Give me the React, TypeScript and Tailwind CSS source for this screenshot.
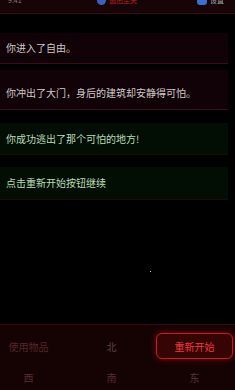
import React from 'react';

const LOG = [
  { text: '你进入了自由。', tone: 'red', box: 'h-[31px]', pad: 'pt-0' },
  { text: '你冲出了大门，身后的建筑却安静得可怕。', tone: 'red', box: 'h-[40px]', pad: 'pt-[6px]' },
  { text: '你成功逃出了那个可怕的地方!', tone: 'green', box: 'h-[32px]', pad: 'pt-0' },
  { text: '点击重新开始按钮继续', tone: 'green', box: 'h-[33px]', pad: 'pt-0' },
];

const GAPS = ['mt-0', 'mt-[6px]', 'mt-[13px]', 'mt-[12px]'];

export default function App() {
  return (
    <div
      className="relative w-[235px] h-[390px] bg-black flex flex-col overflow-hidden"
      style={{ fontFamily: '"Noto Sans CJK SC", "Noto Sans", sans-serif' }}
    >
      {/* top bar, mostly scrolled off */}
      <div className="h-[14px] shrink-0 bg-[#170406] border-b border-[#3b0b0d] overflow-hidden">
        <div className="grid grid-cols-[97px_100px_1fr] items-center mt-[-5px] h-[10px]">
          <span className="pl-[8px] text-[7px] leading-none text-[#8a7a7a]">9:41</span>
          <div className="flex items-center gap-[3px]">
            <span className="w-[9px] h-[9px] rounded-full bg-[#3b5fc0]" />
            <span className="text-[7px] leading-none text-[#c01c1c]">逃出生天</span>
          </div>
          <div className="flex items-center gap-[3px]">
            <span className="w-[10px] h-[9px] rounded-[3px] bg-[#3a70d0]" />
            <span className="text-[7px] leading-none text-[#a8a8b0]">设置</span>
          </div>
        </div>
      </div>

      {/* message log */}
      <div className="flex-1 flex flex-col pt-[19px] pr-[7px]">
        {LOG.map((m, i) => (
          <div
            key={i}
            className={`${GAPS[i]} ${m.box} ${m.pad} flex items-center pl-[6px] border-b ${
              m.tone === 'red'
                ? 'bg-[#100206] border-[#3d0a18]'
                : 'bg-[#020d04] border-[#1a0a08]'
            }`}
          >
            <span
              className={`text-[10px] leading-none whitespace-nowrap ${
                m.tone === 'red' ? 'text-[#cfc9c9]' : 'text-[#b9dcb8]'
              }`}
            >
              {m.text}
            </span>
          </div>
        ))}
      </div>

      {/* stray star */}
      <span className="absolute left-[150px] top-[271px] w-px h-px bg-[#cfcfcf]" />

      {/* action panel */}
      <div className="h-[66px] shrink-0 bg-[#150304] border-t border-[#3a0a0c] pt-[8px]">
        <div className="grid grid-cols-[77px_77px_77px] gap-x-[6px] gap-y-[5px] ml-[-10px]">
          <div className="h-[26px] flex items-center justify-center text-[10px] text-[#552628]">使用物品</div>
          <div className="h-[26px] flex items-center justify-center text-[10px] text-[#634444]">北</div>
          <div className="h-[26px] flex items-center justify-center rounded-[6px] border border-[#cc1a1a] bg-[#350404] shadow-[0_0_6px_rgba(220,30,30,0.5)] text-[10px] text-[#f03a3a]">
            重新开始
          </div>
          <div className="h-[26px] flex items-center justify-center text-[10px] text-[#582c30]">西</div>
          <div className="h-[26px] flex items-center justify-center text-[10px] text-[#582c30]">南</div>
          <div className="h-[26px] flex items-center justify-center text-[10px] text-[#583636]">东</div>
        </div>
      </div>
    </div>
  );
}
